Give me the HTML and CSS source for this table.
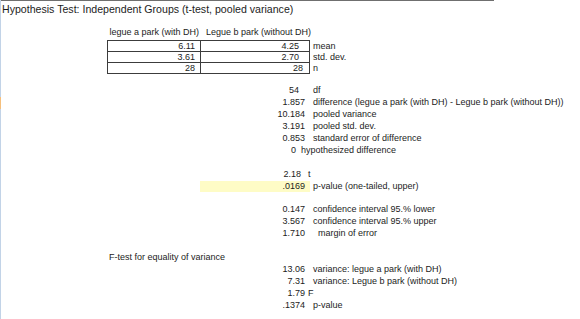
FILE: index.html
```html
<!DOCTYPE html>
<html>
<head>
<meta charset="utf-8">
<link rel="stylesheet" href="styles.css">
</head>
<body>
<div class="sheet">
  <div class="topline"></div>
  <h1 class="title">Hypothesis Test: Independent Groups (t-test, pooled variance)</h1>

  <div class="row row--head">
    <div></div>
    <div class="hd">legue a park (with DH)</div>
    <div class="hd">Legue b park (without DH)</div>
    <div></div>
  </div>

  <div class="tbl">
    <div class="row trow">
      <div></div>
      <div class="tc tc--b">6.11</div>
      <div class="tc tc--c">4.25</div>
      <div class="lbl">mean</div>
    </div>
    <div class="row trow">
      <div></div>
      <div class="tc tc--b">3.61</div>
      <div class="tc tc--c">2.70</div>
      <div class="lbl">std. dev.</div>
    </div>
    <div class="row trow trow--last">
      <div></div>
      <div class="tc tc--b">28</div>
      <div class="tc tc--c tc--int">28</div>
      <div class="lbl">n</div>
    </div>
  </div>

  <div class="lower">
    <div class="row lrow"><div></div><div></div><div class="num num--df">54</div><div class="lbl">df</div></div>
    <div class="row lrow lrow--active"><div></div><div></div><div class="num">1.857</div><div class="lbl">difference (legue a park (with DH) - Legue b park (without DH))</div></div>
    <div class="row lrow"><div></div><div></div><div class="num">10.184</div><div class="lbl">pooled variance</div></div>
    <div class="row lrow"><div></div><div></div><div class="num">3.191</div><div class="lbl">pooled std. dev.</div></div>
    <div class="row lrow"><div></div><div></div><div class="num">0.853</div><div class="lbl">standard error of difference</div></div>
    <div class="row lrow"><div></div><div></div><div class="num num--zero">0</div><div class="lbl lbl--hyp">hypothesized difference</div></div>
    <div class="row lrow"></div>
    <div class="row lrow"><div></div><div></div><div class="num num--t">2.18</div><div class="lbl lbl--short">t</div></div>
    <div class="row lrow"><div></div><div></div><div class="num num--hl">.0169</div><div class="lbl">p-value (one-tailed, upper)</div></div>
    <div class="row lrow"></div>
    <div class="row lrow"><div></div><div></div><div class="num">0.147</div><div class="lbl">confidence interval 95.% lower</div></div>
    <div class="row lrow"><div></div><div></div><div class="num">3.567</div><div class="lbl">confidence interval 95.% upper</div></div>
    <div class="row lrow"><div></div><div></div><div class="num">1.710</div><div class="lbl lbl--indent">margin of error</div></div>
    <div class="row lrow"></div>
    <div class="row lrow"><div></div><div class="sec">F-test for equality of variance</div><div></div><div></div></div>
    <div class="row lrow"><div></div><div></div><div class="num">13.06</div><div class="lbl">variance: legue a park (with DH)</div></div>
    <div class="row lrow"><div></div><div></div><div class="num">7.31</div><div class="lbl">variance: Legue b park (without DH)</div></div>
    <div class="row lrow"><div></div><div></div><div class="num">1.79</div><div class="lbl lbl--short">F</div></div>
    <div class="row lrow"><div></div><div></div><div class="num">.1374</div><div class="lbl">p-value</div></div>
  </div>
</div>
</body>
</html>
```

FILE: styles.css
```css
html, body {
  margin: 0;
  padding: 0;
  background: #ffffff;
}

body {
  width: 580px;
  height: 319px;
  overflow: hidden;
  font-family: "Liberation Sans", Arial, sans-serif;
  color: #1c1c1c;
}

.sheet {
  height: 319px;
  border-left: 1px solid #c2d3e7;
}

.topline {
  width: 493px;
  height: 1px;
  background: #6f6f6f;
}

.title {
  margin: 0 0 9px 1px;
  font-size: 10.6px;
  line-height: 16px;
  font-weight: normal;
  white-space: nowrap;
}

.row {
  display: grid;
  grid-template-columns: 106px 93px 110px 1fr;
  font-size: 9px;
  white-space: nowrap;
}

.row--head {
  height: 12px;
  line-height: 12px;
  margin-bottom: 2px;
}

.hd {
  text-align: right;
  padding-right: 1px;
}

.row--head .hd:nth-child(3) {
  padding-right: 0;
  margin-right: -1px;
}

.trow {
  height: 11px;
  line-height: 10px;
}

.trow--last {
  height: 12px;
}

.tc {
  box-sizing: border-box;
  text-align: right;
  border-top: 1px solid #3c3c3c;
  border-left: 1px solid #3c3c3c;
}

.trow--last .tc {
  border-bottom: 1px solid #3c3c3c;
}

.tc--b {
  padding-right: 5px;
}

.tc--c {
  border-right: 1px solid #3c3c3c;
  padding-right: 10px;
}

.tc--c.tc--int {
  padding-right: 6px;
}

.trow .lbl {
  padding-top: 1px;
}

.lower {
  margin-top: 11px;
}

.lrow {
  height: 11.95px;
  line-height: 11.95px;
}

.lrow--active {
  box-shadow: -1px 0 0 #f5bf7c;
}

.num {
  text-align: right;
  padding-right: 5px;
}

.num--hl {
  background: #fefcc6;
}

.num--df {
  padding-right: 11px;
}

.num--zero {
  padding-right: 14px;
}

.num--t {
  padding-right: 9px;
}

.lbl {
  padding-left: 3px;
}

.lbl--hyp {
  margin-left: -12px;
}

.lbl--short {
  margin-left: -5px;
}

.lbl--indent {
  padding-left: 8px;
}

.sec {
  padding-left: 2px;
  overflow: visible;
}
```
